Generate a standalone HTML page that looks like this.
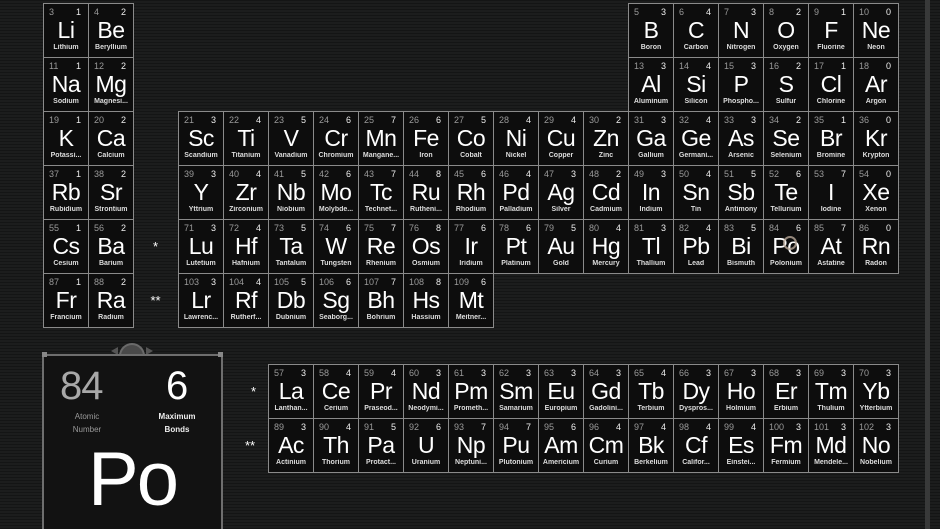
<!DOCTYPE html>
<html><head><meta charset="utf-8"><style>
*{margin:0;padding:0;box-sizing:border-box}
html,body{width:940px;height:529px;overflow:hidden}
body{position:relative;font-family:"Liberation Sans",sans-serif;background:#1c1d1d;background-image:repeating-linear-gradient(0deg,rgba(0,0,0,.28) 0 1px,transparent 1px 3px)}
.g{position:absolute;display:grid;grid-auto-rows:54px}
.g1{left:43px;top:3px;grid-template-columns:repeat(19,45px)}
.g2{left:268px;top:364px;grid-template-columns:repeat(14,45px)}
.c{position:relative;border:1px solid #8a8a8a;background:#0d0d0d;margin:0 -1px -1px 0}
.c i,.c b{position:absolute;top:3px;font-size:9px;font-style:normal;font-weight:normal}
.c i{left:5px;color:#9a9a9a}
.c b{right:7px;color:#eee}
.c s{position:absolute;left:0;right:0;top:13px;text-align:center;font-size:23px;color:#fff;text-decoration:none;letter-spacing:-.5px}
.c u{position:absolute;left:0;right:0;top:40px;text-align:center;font-size:7px;font-weight:bold;color:#ddd;text-decoration:none;white-space:nowrap;overflow:hidden}
.st{color:#fff;font-size:13px;text-align:center;padding-top:20px}
.bar{position:absolute;left:925px;top:0;width:5px;height:529px;background:#383939}
.p{position:absolute;left:42px;top:354px;width:181px;height:190px;border:2px solid #6e6e6e;background:#121212}
.dome{position:absolute;left:119px;top:343px;width:26px;height:13px;border-radius:13px 13px 0 0;background:#4a4a4a;border:2px solid #6a6a6a;border-bottom:none}
.tri{position:absolute;top:347px;width:0;height:0;border-top:4px solid transparent;border-bottom:4px solid transparent}
.sq{position:absolute;width:5px;height:5px;background:#888}
</style></head><body>
<div class="bar"></div>
<div class="g g1">
<div class="c"><i>3</i><b>1</b><s>Li</s><u>Lithium</u></div>
<div class="c"><i>4</i><b>2</b><s>Be</s><u>Beryllium</u></div>
<div class="c" style="grid-column-start:14"><i>5</i><b>3</b><s>B</s><u>Boron</u></div>
<div class="c"><i>6</i><b>4</b><s>C</s><u>Carbon</u></div>
<div class="c"><i>7</i><b>3</b><s>N</s><u>Nitrogen</u></div>
<div class="c"><i>8</i><b>2</b><s>O</s><u>Oxygen</u></div>
<div class="c"><i>9</i><b>1</b><s>F</s><u>Fluorine</u></div>
<div class="c"><i>10</i><b>0</b><s>Ne</s><u>Neon</u></div>

<div class="c"><i>11</i><b>1</b><s>Na</s><u>Sodium</u></div>
<div class="c"><i>12</i><b>2</b><s>Mg</s><u>Magnesi...</u></div>
<div class="c" style="grid-column-start:14"><i>13</i><b>3</b><s>Al</s><u>Aluminum</u></div>
<div class="c"><i>14</i><b>4</b><s>Si</s><u>Silicon</u></div>
<div class="c"><i>15</i><b>3</b><s>P</s><u>Phospho...</u></div>
<div class="c"><i>16</i><b>2</b><s>S</s><u>Sulfur</u></div>
<div class="c"><i>17</i><b>1</b><s>Cl</s><u>Chlorine</u></div>
<div class="c"><i>18</i><b>0</b><s>Ar</s><u>Argon</u></div>

<div class="c"><i>19</i><b>1</b><s>K</s><u>Potassi...</u></div>
<div class="c"><i>20</i><b>2</b><s>Ca</s><u>Calcium</u></div>
<div class="c" style="grid-column-start:4"><i>21</i><b>3</b><s>Sc</s><u>Scandium</u></div>
<div class="c"><i>22</i><b>4</b><s>Ti</s><u>Titanium</u></div>
<div class="c"><i>23</i><b>5</b><s>V</s><u>Vanadium</u></div>
<div class="c"><i>24</i><b>6</b><s>Cr</s><u>Chromium</u></div>
<div class="c"><i>25</i><b>7</b><s>Mn</s><u>Mangane...</u></div>
<div class="c"><i>26</i><b>6</b><s>Fe</s><u>Iron</u></div>
<div class="c"><i>27</i><b>5</b><s>Co</s><u>Cobalt</u></div>
<div class="c"><i>28</i><b>4</b><s>Ni</s><u>Nickel</u></div>
<div class="c"><i>29</i><b>4</b><s>Cu</s><u>Copper</u></div>
<div class="c"><i>30</i><b>2</b><s>Zn</s><u>Zinc</u></div>
<div class="c"><i>31</i><b>3</b><s>Ga</s><u>Gallium</u></div>
<div class="c"><i>32</i><b>4</b><s>Ge</s><u>Germani...</u></div>
<div class="c"><i>33</i><b>3</b><s>As</s><u>Arsenic</u></div>
<div class="c"><i>34</i><b>2</b><s>Se</s><u>Selenium</u></div>
<div class="c"><i>35</i><b>1</b><s>Br</s><u>Bromine</u></div>
<div class="c"><i>36</i><b>0</b><s>Kr</s><u>Krypton</u></div>

<div class="c"><i>37</i><b>1</b><s>Rb</s><u>Rubidium</u></div>
<div class="c"><i>38</i><b>2</b><s>Sr</s><u>Strontium</u></div>
<div class="c" style="grid-column-start:4"><i>39</i><b>3</b><s>Y</s><u>Yttrium</u></div>
<div class="c"><i>40</i><b>4</b><s>Zr</s><u>Zirconium</u></div>
<div class="c"><i>41</i><b>5</b><s>Nb</s><u>Niobium</u></div>
<div class="c"><i>42</i><b>6</b><s>Mo</s><u>Molybde...</u></div>
<div class="c"><i>43</i><b>7</b><s>Tc</s><u>Technet...</u></div>
<div class="c"><i>44</i><b>8</b><s>Ru</s><u>Rutheni...</u></div>
<div class="c"><i>45</i><b>6</b><s>Rh</s><u>Rhodium</u></div>
<div class="c"><i>46</i><b>4</b><s>Pd</s><u>Palladium</u></div>
<div class="c"><i>47</i><b>3</b><s>Ag</s><u>Silver</u></div>
<div class="c"><i>48</i><b>2</b><s>Cd</s><u>Cadmium</u></div>
<div class="c"><i>49</i><b>3</b><s>In</s><u>Indium</u></div>
<div class="c"><i>50</i><b>4</b><s>Sn</s><u>Tin</u></div>
<div class="c"><i>51</i><b>5</b><s>Sb</s><u>Antimony</u></div>
<div class="c"><i>52</i><b>6</b><s>Te</s><u>Tellurium</u></div>
<div class="c"><i>53</i><b>7</b><s>I</s><u>Iodine</u></div>
<div class="c"><i>54</i><b>0</b><s>Xe</s><u>Xenon</u></div>

<div class="c"><i>55</i><b>1</b><s>Cs</s><u>Cesium</u></div>
<div class="c"><i>56</i><b>2</b><s>Ba</s><u>Barium</u></div>
<div class="st">*</div>
<div class="c"><i>71</i><b>3</b><s>Lu</s><u>Lutetium</u></div>
<div class="c"><i>72</i><b>4</b><s>Hf</s><u>Hafnium</u></div>
<div class="c"><i>73</i><b>5</b><s>Ta</s><u>Tantalum</u></div>
<div class="c"><i>74</i><b>6</b><s>W</s><u>Tungsten</u></div>
<div class="c"><i>75</i><b>7</b><s>Re</s><u>Rhenium</u></div>
<div class="c"><i>76</i><b>8</b><s>Os</s><u>Osmium</u></div>
<div class="c"><i>77</i><b>6</b><s>Ir</s><u>Iridium</u></div>
<div class="c"><i>78</i><b>6</b><s>Pt</s><u>Platinum</u></div>
<div class="c"><i>79</i><b>5</b><s>Au</s><u>Gold</u></div>
<div class="c"><i>80</i><b>4</b><s>Hg</s><u>Mercury</u></div>
<div class="c"><i>81</i><b>3</b><s>Tl</s><u>Thallium</u></div>
<div class="c"><i>82</i><b>4</b><s>Pb</s><u>Lead</u></div>
<div class="c"><i>83</i><b>5</b><s>Bi</s><u>Bismuth</u></div>
<div class="c"><i>84</i><b>6</b><s>Po</s><u>Polonium</u></div>
<div class="c"><i>85</i><b>7</b><s>At</s><u>Astatine</u></div>
<div class="c"><i>86</i><b>0</b><s>Rn</s><u>Radon</u></div>

<div class="c"><i>87</i><b>1</b><s>Fr</s><u>Francium</u></div>
<div class="c"><i>88</i><b>2</b><s>Ra</s><u>Radium</u></div>
<div class="st">**</div>
<div class="c"><i>103</i><b>3</b><s>Lr</s><u>Lawrenc...</u></div>
<div class="c"><i>104</i><b>4</b><s>Rf</s><u>Rutherf...</u></div>
<div class="c"><i>105</i><b>5</b><s>Db</s><u>Dubnium</u></div>
<div class="c"><i>106</i><b>6</b><s>Sg</s><u>Seaborg...</u></div>
<div class="c"><i>107</i><b>7</b><s>Bh</s><u>Bohrium</u></div>
<div class="c"><i>108</i><b>8</b><s>Hs</s><u>Hassium</u></div>
<div class="c"><i>109</i><b>6</b><s>Mt</s><u>Meitner...</u></div>
</div>

<div style="position:absolute;left:251px;top:384px;color:#fff;font-size:13px">*</div>
<div style="position:absolute;left:245px;top:438px;color:#fff;font-size:13px">**</div>

<div class="g g2">
<div class="c"><i>57</i><b>3</b><s>La</s><u>Lanthan...</u></div>
<div class="c"><i>58</i><b>4</b><s>Ce</s><u>Cerium</u></div>
<div class="c"><i>59</i><b>4</b><s>Pr</s><u>Praseod...</u></div>
<div class="c"><i>60</i><b>3</b><s>Nd</s><u>Neodymi...</u></div>
<div class="c"><i>61</i><b>3</b><s>Pm</s><u>Prometh...</u></div>
<div class="c"><i>62</i><b>3</b><s>Sm</s><u>Samarium</u></div>
<div class="c"><i>63</i><b>3</b><s>Eu</s><u>Europium</u></div>
<div class="c"><i>64</i><b>3</b><s>Gd</s><u>Gadolini...</u></div>
<div class="c"><i>65</i><b>4</b><s>Tb</s><u>Terbium</u></div>
<div class="c"><i>66</i><b>3</b><s>Dy</s><u>Dyspros...</u></div>
<div class="c"><i>67</i><b>3</b><s>Ho</s><u>Holmium</u></div>
<div class="c"><i>68</i><b>3</b><s>Er</s><u>Erbium</u></div>
<div class="c"><i>69</i><b>3</b><s>Tm</s><u>Thulium</u></div>
<div class="c"><i>70</i><b>3</b><s>Yb</s><u>Ytterbium</u></div>

<div class="c"><i>89</i><b>3</b><s>Ac</s><u>Actinium</u></div>
<div class="c"><i>90</i><b>4</b><s>Th</s><u>Thorium</u></div>
<div class="c"><i>91</i><b>5</b><s>Pa</s><u>Protact...</u></div>
<div class="c"><i>92</i><b>6</b><s>U</s><u>Uranium</u></div>
<div class="c"><i>93</i><b>7</b><s>Np</s><u>Neptuni...</u></div>
<div class="c"><i>94</i><b>7</b><s>Pu</s><u>Plutonium</u></div>
<div class="c"><i>95</i><b>6</b><s>Am</s><u>Americium</u></div>
<div class="c"><i>96</i><b>4</b><s>Cm</s><u>Curium</u></div>
<div class="c"><i>97</i><b>4</b><s>Bk</s><u>Berkelium</u></div>
<div class="c"><i>98</i><b>4</b><s>Cf</s><u>Califor...</u></div>
<div class="c"><i>99</i><b>4</b><s>Es</s><u>Einstei...</u></div>
<div class="c"><i>100</i><b>3</b><s>Fm</s><u>Fermium</u></div>
<div class="c"><i>101</i><b>3</b><s>Md</s><u>Mendele...</u></div>
<div class="c"><i>102</i><b>3</b><s>No</s><u>Nobelium</u></div>
</div>

<div style="position:absolute;left:783px;top:236px;width:14px;height:14px;border-radius:50%;border:2px solid #b8a898;opacity:.8"></div>

<div class="tri" style="left:111px;border-right:7px solid #555"></div>
<div class="tri" style="left:146px;border-left:7px solid #555"></div>
<div class="dome"></div>
<div class="p">
 <div style="position:absolute;left:16px;top:8px;font-size:40px;color:#a8a8a8;letter-spacing:-1px">84</div>
 <div style="position:absolute;left:122px;top:8px;font-size:40px;color:#fff">6</div>
 <div style="position:absolute;left:20px;top:54px;width:46px;text-align:center;font-size:8px;color:#999;line-height:13px">Atomic<br>Number</div>
 <div style="position:absolute;left:110px;top:54px;width:46px;text-align:center;font-size:8px;font-weight:bold;color:#eee;line-height:13px">Maximum<br>Bonds</div>
 <div style="position:absolute;left:44px;top:80px;font-size:76px;color:#fff;letter-spacing:-2px">Po</div>
</div>
<div class="sq" style="left:42px;top:352px"></div>
<div class="sq" style="left:218px;top:352px"></div>
</body></html>
